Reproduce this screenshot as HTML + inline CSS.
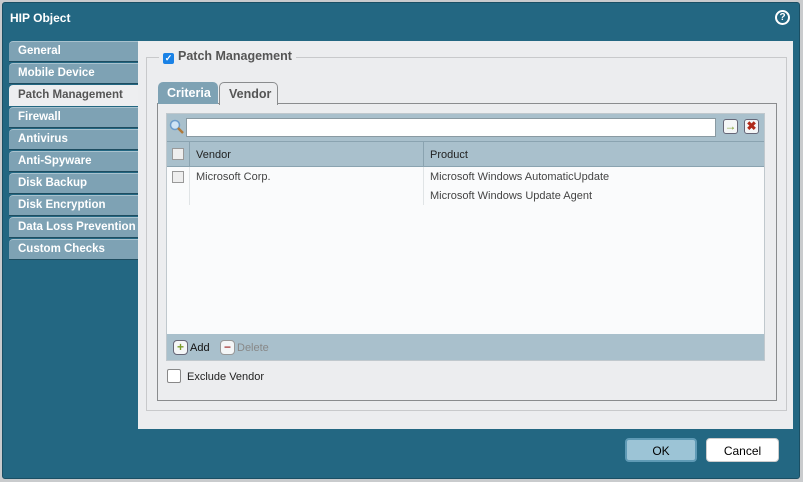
<!DOCTYPE html>
<html><head><style>
*{box-sizing:border-box;margin:0;padding:0}
body{width:803px;height:482px;background:#c9cbcd;font-family:"Liberation Sans",sans-serif;position:relative;overflow:hidden}
.dlg{position:absolute;left:2px;top:2px;width:798px;height:477px;background:#236782;border:1px solid #1a4f64;border-radius:3px}
.title{position:absolute;left:10px;top:11px;color:#fff;font-weight:bold;font-size:12px}
.help{position:absolute;left:775px;top:10px;width:15px;height:15px;border:2px solid #fff;border-radius:50%;color:#fff;font-size:10px;font-weight:bold;text-align:center;line-height:11px}
.tab{position:absolute;left:9px;width:129px;height:21px;background:#7ea2b4;color:#fff;font-weight:bold;font-size:11.5px;padding:3px 0 0 9px;border-radius:4px 0 0 0;border-top:1px solid #a9c2ce;border-bottom:1px solid #1f4d60}
.tab.sel{background:#edeef0;color:#555;border-color:#edeef0}
.main{position:absolute;left:138px;top:41px;width:655px;height:388px;background:#ecedef}
.fs{position:absolute;left:146px;top:57px;width:641px;height:354px;border:1px solid #c8c9cb}
.leg{position:absolute;left:159px;top:49px;background:#ecedef;padding:0 4px;font-size:12.5px;font-weight:bold;color:#555;height:16px}
.cb{display:inline-block;width:11px;height:11px;background:#1a82e6;border-radius:2px;vertical-align:-1px;margin-right:4px;color:#fff;font-size:9px;line-height:11px;text-align:center}
.tp{position:absolute;left:157px;top:103px;width:620px;height:298px;border:1px solid #8a8c8e}
.t2{position:absolute;top:82px;height:22px;font-size:12.5px;font-weight:bold;padding:4px 9px 0;border-radius:5px 5px 0 0}
.grid{position:absolute;left:166px;top:113px;width:599px;height:248px;background:#fafbfc;border:1px solid #c0c8cd}
.tb{position:absolute;left:0;top:0;width:597px;height:27px;background:#a9c0cc}
.srch{position:absolute;left:19px;top:4px;width:530px;height:19px;background:#fff;border:1px solid #8a9aa2}
.ib{position:absolute;top:5px;width:15px;height:15px;border:1px solid #667;border-radius:3px;background:#f4f6f7;font-size:12px;line-height:12px;text-align:center;font-weight:bold}
.hd{position:absolute;left:0;top:27px;width:597px;height:26px;background:#a9c0cc;border-top:1px solid #8aa3b0;border-bottom:1px solid #8aa3b0;font-size:11px;color:#222}
.bx{position:absolute;width:12px;height:12px;border:1px solid #999;background:#eee}
.ft{position:absolute;left:0;bottom:0;width:597px;height:26px;background:#a9c0cc;font-size:11px}
.rt{font-size:11px;color:#444;position:absolute}
.btn{position:absolute;top:438px;height:24px;border-radius:4px;font-size:12px;text-align:center;line-height:22px}
</style></head><body>
<div class="dlg"></div>
<div class="title">HIP Object</div>
<div class="help">?</div>
<div class="tab" style="top:41px">General</div>
<div class="tab" style="top:63px">Mobile Device</div>
<div class="tab sel" style="top:85px">Patch Management</div>
<div class="tab" style="top:107px">Firewall</div>
<div class="tab" style="top:129px">Antivirus</div>
<div class="tab" style="top:151px">Anti-Spyware</div>
<div class="tab" style="top:173px">Disk Backup</div>
<div class="tab" style="top:195px">Disk Encryption</div>
<div class="tab" style="top:217px">Data Loss Prevention</div>
<div class="tab" style="top:239px">Custom Checks</div>
<div class="main"></div>
<div class="fs"></div>
<div class="leg"><span class="cb">✓</span>Patch Management</div>
<div class="tp"></div>
<div class="t2" style="left:158px;width:60px;background:#7ea2b4;color:#fff">Criteria</div>
<div class="t2" style="left:219px;width:59px;background:#ecedef;color:#555;border:1px solid #8a8c8e;border-bottom:none;height:23px">Vendor</div>
<div class="grid">
 <div class="tb">
  <svg style="position:absolute;left:2px;top:5px" width="16" height="16"><circle cx="6" cy="6" r="4.5" fill="#cfe3f5" stroke="#6d9ccb" stroke-width="1.5"/><line x1="9" y1="9" x2="14" y2="14" stroke="#b07a3a" stroke-width="2.5"/></svg>
  <div class="srch"></div>
  <div class="ib" style="left:556px;color:#7a9c2a">→</div>
  <div class="ib" style="left:577px;color:#b02a1a">✖</div>
 </div>
 <div class="hd">
  <div class="bx" style="left:5px;top:6px"></div>
  <div style="position:absolute;left:22px;top:0;height:24px;border-left:1px solid #8aa3b0"></div>
  <div style="position:absolute;left:29px;top:7px">Vendor</div>
  <div style="position:absolute;left:256px;top:0;height:24px;border-left:1px solid #8aa3b0"></div>
  <div style="position:absolute;left:263px;top:7px">Product</div>
 </div>
 <div class="bx" style="left:5px;top:57px"></div>
 <div style="position:absolute;left:22px;top:53px;height:38px;border-left:1px solid #e0e4e6"></div>
 <div style="position:absolute;left:256px;top:53px;height:38px;border-left:1px solid #e0e4e6"></div>
 <div class="rt" style="left:29px;top:57px">Microsoft Corp.</div>
 <div class="rt" style="left:263px;top:57px">Microsoft Windows AutomaticUpdate</div>
 <div class="rt" style="left:263px;top:76px">Microsoft Windows Update Agent</div>
 <div class="ft">
  <div class="ib" style="left:6px;top:6px;color:#7a9c2a;border-radius:4px">+</div>
  <div style="position:absolute;left:23px;top:8px;color:#111">Add</div>
  <div class="ib" style="left:53px;top:6px;color:#a44;border-color:#999;border-radius:4px">−</div>
  <div style="position:absolute;left:70px;top:8px;color:#888">Delete</div>
 </div>
</div>
<div style="position:absolute;left:167px;top:369px;width:14px;height:14px;background:#fff;border:1px solid #888;border-radius:2px"></div>
<div style="position:absolute;left:187px;top:371px;font-size:11px;color:#222">Exclude Vendor</div>
<div class="btn" style="left:625px;width:72px;background:#9cc4d6;border:2px solid #5f9ab5">OK</div>
<div class="btn" style="left:706px;width:73px;background:#fff;border:1px solid #ccc;line-height:24px">Cancel</div>
</body></html>
